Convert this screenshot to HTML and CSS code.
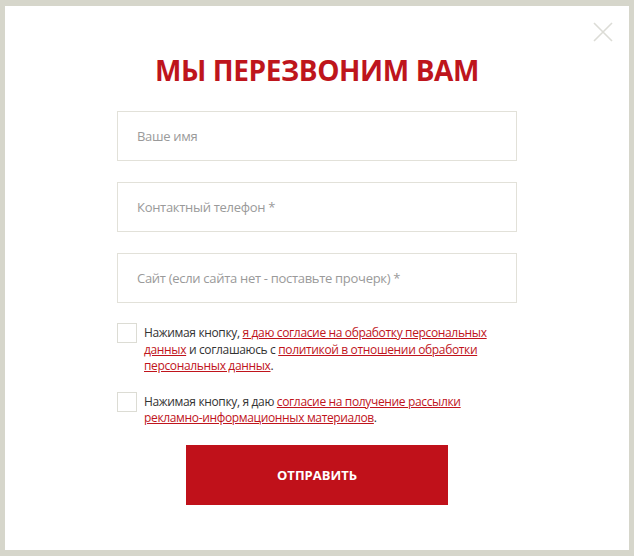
FILE: index.html
```html
<!DOCTYPE html>
<html lang="ru">
<head>
    <meta charset="UTF-8">
    <meta name="viewport" content="width=device-width, initial-scale=1.0">
    <title>Мы перезвоним вам</title>
    <link rel="stylesheet" href="styles.css">
</head>
<body>

    <div class="modal">
        <button class="close-btn" type="button" aria-label="Закрыть">
            <svg width="20" height="20" viewBox="0 0 20 20">
                <path d="M1 1 L19 19 M19 1 L1 19" stroke="#dcdcd6" stroke-width="1.6" fill="none"/>
            </svg>
        </button>

        <h1>МЫ ПЕРЕЗВОНИМ ВАМ</h1>

        <form class="callback-form">
            <input type="text" placeholder="Ваше имя">
            <input type="tel" placeholder="Контактный телефон *">
            <input type="text" placeholder="Сайт (если сайта нет - поставьте прочерк) *">

            <label class="agree">
                <span class="box"></span>
                <span class="agree-text">Нажимая кнопку, <a href="#">я даю согласие на обработку персональных данных</a> и соглашаюсь с <a href="#">политикой в отношении обработки персональных данных</a>.</span>
            </label>

            <label class="agree">
                <span class="box"></span>
                <span class="agree-text">Нажимая кнопку, я даю <a href="#">согласие на получение рассылки рекламно-информационных материалов</a>.</span>
            </label>

            <button class="send-btn" type="submit">ОТПРАВИТЬ</button>
        </form>
    </div>

</body>
</html>
```

FILE: styles.css
```css
body {
    margin: 0;
    padding: 6px 5px;
    background-color: #d6d6cb;
    font-family: "Open Sans", "Noto Sans", sans-serif;
}

.modal {
    position: relative;
    background-color: #fff;
    height: 544px;
    box-sizing: border-box;
    padding-top: 44px;
}

.close-btn {
    position: absolute;
    top: 16px;
    right: 16px;
    background: none;
    border: none;
    padding: 0;
    cursor: pointer;
}

h1 {
    margin: 0;
    text-align: center;
    font-size: 28px;
    line-height: 40px;
    font-weight: 700;
    letter-spacing: -0.4px;
    color: #be151c;
}

.callback-form {
    width: 400px;
    margin: 21px auto 0;
    display: flex;
    flex-direction: column;
}

.callback-form input {
    height: 50px;
    box-sizing: border-box;
    border: 1px solid #e2e1d9;
    padding: 0 19px;
    margin-bottom: 21px;
    font-family: inherit;
    font-size: 13px;
    letter-spacing: -0.3px;
    color: #333;
    outline: none;
}

.callback-form input::placeholder {
    color: #9a9a9a;
}

.agree {
    display: flex;
    gap: 7px;
    margin-bottom: 17px;
    font-size: 12px;
    line-height: 16.5px;
    letter-spacing: -0.35px;
    color: #333;
}

.agree:first-of-type {
    margin-top: -1px;
}

.box {
    flex: none;
    width: 18px;
    height: 18px;
    border: 1px solid #dcdcd4;
}

.agree-text {
    padding-top: 2px;
}

.agree a {
    color: #c0141c;
    text-decoration: underline;
}

.send-btn {
    align-self: center;
    width: 262px;
    height: 60px;
    margin-top: 1px;
    background-color: #c0111a;
    color: #fff;
    border: none;
    font-family: inherit;
    font-size: 13px;
    font-weight: 700;
    cursor: pointer;
}

.send-btn:hover {
    background-color: #a80e16;
}
```
